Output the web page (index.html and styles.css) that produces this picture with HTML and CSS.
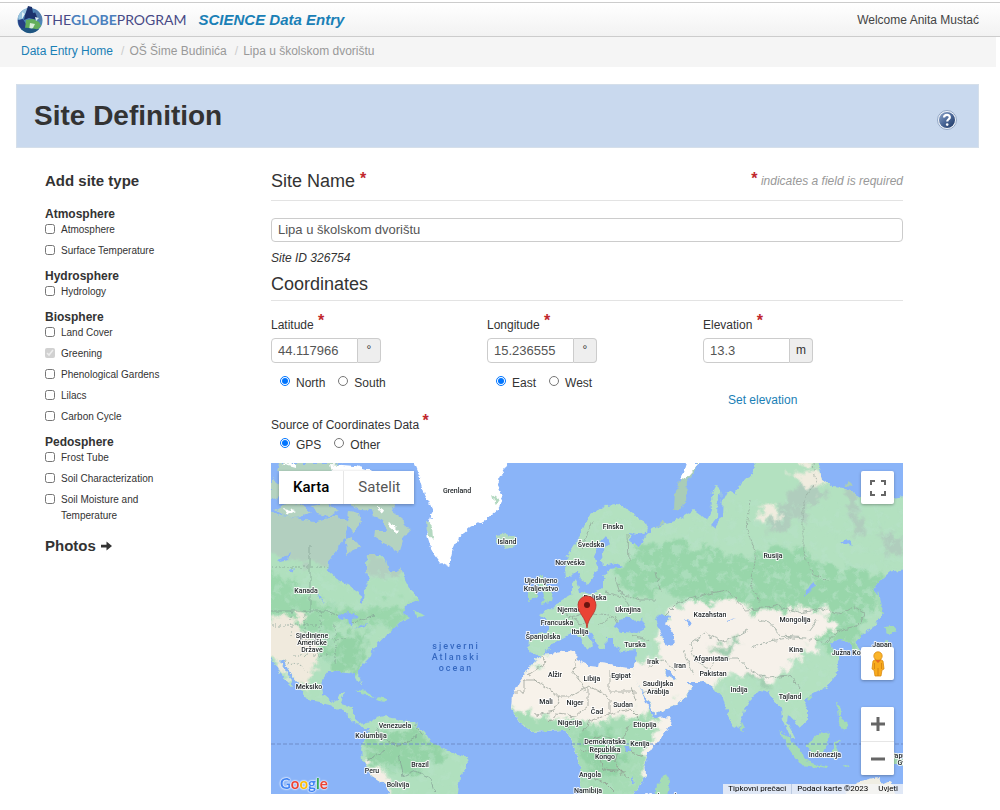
FILE: index.html
```html
<!DOCTYPE html>
<html lang="hr">
<head>
<meta charset="utf-8">
<meta name="viewport" content="width=device-width, initial-scale=1">
<title>Site Definition</title>
<link rel="stylesheet" href="styles.css">
</head>
<body>
<header class="topbar">
  <a class="brand" href="#" aria-label="The GLOBE Program">
    <svg class="brand-globe" viewBox="0 0 28 28" aria-hidden="true">
      <circle cx="14" cy="14.500" r="12.500" fill="#4d86b8"/>
      <path d="M2 11C4 5 9 2 14 2l-2 5-4 1-1 4-4 3z" fill="#9cc7e0"/>
      <path d="M12 0l4 1 1 6 4-1 2 4-2 4-8-2-5 2 1-5z" fill="#1c326c"/>
      <path d="M18 3c5 2 8 6 8 11l-3 2-2-5z" fill="#557dac"/>
      <path d="M2 14l5-1 3 5-1 7C4 23 2 19 2 14z" fill="#263f83"/>
      <path d="M10 14l7-1 6 3 2 4-5 5-6-3-5 1z" fill="#63ae5b"/>
      <path d="M14 17l5 1-2 4-4 3z" fill="#d8edd8"/>
      <path d="M5 23c6-3 12 1 18 0-4 5-12 6-18 0z" fill="#1f5581"/>
      <path d="M6 6l3 2-3 5zM19 11l4 1-3 3z" fill="#e0f1f5"/>
    </svg>
    <span class="brand-name">THE<b>GLOBE</b>PROGRAM</span>
  </a>
  <a class="app-name" href="#">SCIENCE Data Entry</a>
  <span class="welcome">Welcome Anita Mustać</span>
</header>
<nav class="crumbs" aria-label="Breadcrumb">
  <a href="#">Data Entry Home</a><span class="slash">/</span><span>OŠ Šime Budinića</span><span class="slash">/</span><span>Lipa u školskom dvorištu</span>
</nav>

<div class="page">
  <div class="banner">
    <h1>Site Definition</h1>
    <button class="help" type="button" aria-label="Help">
      <svg viewBox="0 0 22 22" aria-hidden="true">
        <defs><linearGradient id="helpFill" x1="0" y1="0" x2="1" y2="1"><stop offset="0" stop-color="#91a8cb"/><stop offset=".5" stop-color="#4a6797"/><stop offset="1" stop-color="#1c3561"/></linearGradient></defs>
        <circle cx="11" cy="11" r="9.500" fill="#f1f5fa" stroke="#93a8c6"/>
        <circle cx="11" cy="11" r="8" fill="url(#helpFill)"/>
        <path d="M8 8.500c.3-3.600 6.200-3.300 5.800 0-.2 1.800-2.600 1.800-2.600 4" fill="none" stroke="#fff" stroke-width="2.200"/>
        <circle cx="11.200" cy="15.600" r="1.300" fill="#fff"/>
      </svg>
    </button>
  </div>

  <div class="columns">
    <aside class="sidebar">
      <h2>Add site type</h2>
      <fieldset><legend>Atmosphere</legend>
        <label><input type="checkbox"><span>Atmosphere</span></label>
        <label><input type="checkbox"><span>Surface Temperature</span></label>
      </fieldset>
      <fieldset><legend>Hydrosphere</legend>
        <label><input type="checkbox"><span>Hydrology</span></label>
      </fieldset>
      <fieldset><legend>Biosphere</legend>
        <label><input type="checkbox"><span>Land Cover</span></label>
        <label><input type="checkbox" checked disabled><span>Greening</span></label>
        <label><input type="checkbox"><span>Phenological Gardens</span></label>
        <label><input type="checkbox"><span>Lilacs</span></label>
        <label><input type="checkbox"><span>Carbon Cycle</span></label>
      </fieldset>
      <fieldset><legend>Pedosphere</legend>
        <label><input type="checkbox"><span>Frost Tube</span></label>
        <label><input type="checkbox"><span>Soil Characterization</span></label>
        <label><input type="checkbox"><span>Soil Moisture and Temperature</span></label>
      </fieldset>
      <a class="photos" href="#">Photos
        <svg viewBox="0 0 12 10" aria-hidden="true"><path d="M0 3.500h6V0l6 5-6 5V6.500H0z" fill="#333"/></svg>
      </a>
    </aside>

    <main class="form">
      <div class="section-head">
        <h2><label for="site-name">Site Name</label> <span class="req">*</span></h2>
        <p class="hint"><span class="req">*</span> indicates a field is required</p>
      </div>
      <input class="text-field site-name" id="site-name" type="text" value="Lipa u školskom dvorištu">
      <p class="site-id">Site ID 326754</p>
      <div class="section-head coords-head"><h2>Coordinates</h2></div>

      <div class="coords">
        <div class="coord">
          <label for="lat">Latitude <span class="req">*</span></label>
          <div class="unit-field"><input id="lat" type="text" value="44.117966"><span>°</span></div>
          <div class="radios">
            <label><input type="radio" name="ns" checked>North</label>
            <label><input type="radio" name="ns">South</label>
          </div>
        </div>
        <div class="coord">
          <label for="lon">Longitude <span class="req">*</span></label>
          <div class="unit-field"><input id="lon" type="text" value="15.236555"><span>°</span></div>
          <div class="radios">
            <label><input type="radio" name="ew" checked>East</label>
            <label><input type="radio" name="ew">West</label>
          </div>
        </div>
        <div class="coord">
          <label for="elev">Elevation <span class="req">*</span></label>
          <div class="unit-field"><input id="elev" type="text" value="13.3"><span>m</span></div>
          <a class="set-elevation" href="#">Set elevation</a>
        </div>
      </div>

      <div class="source" role="radiogroup" aria-labelledby="source-label">
        <div id="source-label">Source of Coordinates Data <span class="req">*</span></div>
        <div class="radios">
          <label><input type="radio" name="src" checked>GPS</label>
          <label><input type="radio" name="src">Other</label>
        </div>
      </div>

      <div class="map">
        <svg class="map-canvas" viewBox="271 463 632 331" role="img" aria-label="World map">
          <defs>
            <filter id="coast" x="-2%" y="-2%" width="104%" height="104%">
              <feTurbulence type="fractalNoise" baseFrequency=".16" numOctaves="3" seed="4" result="n"/>
              <feDisplacementMap in="SourceGraphic" in2="n" scale="6" xChannelSelector="R" yChannelSelector="G"/>
            </filter>
            <filter id="patch" x="-10%" y="-10%" width="120%" height="120%">
              <feTurbulence type="fractalNoise" baseFrequency=".09" numOctaves="4" seed="9" result="n"/>
              <feDisplacementMap in="SourceGraphic" in2="n" scale="28" xChannelSelector="R" yChannelSelector="G" result="d"/>
              <feGaussianBlur in="d" stdDeviation=".8"/>
            </filter>
            <!-- speckled vegetation shading -->
            <filter id="speckle" x="0" y="0" width="100%" height="100%">
              <feTurbulence type="fractalNoise" baseFrequency=".11" numOctaves="4" seed="21"/>
              <feColorMatrix values="0 0 0 0 .47  0 0 0 0 .76  0 0 0 0 .57  5 0 0 0 -2.500"/>
            </filter>
            <clipPath id="america"><path d="M265 508L280 516 300 519 312 522 325 519 335 515 349 524 343 540 336 552 329 560 328 571 338 580 350 586 359 592 361 602 364 601 365 590 369 580 366 565 367 555 380 555 386 560 389 572 397 571 401 568 404 578 409 588 418 596 419 602 405 606 402 614 410 618 395 625 385 636 374 648 372 656 362 666 358 671 362 681 359 683 354 674 340 672 328 671 321 680 323 694 332 702 338 700 341 693 345 692 341 704 354 708 354 719 360 724 372 722 376 718 385 716 400 720 415 722 425 732 432 744 450 752 467 757 468 766 460 776 457 800 391 800 385 784 372 776 362 760 361 748 366 735 370 727 363 727 352 722 345 712 330 705 315 702 305 696 298 683 292 676 284 662 279 661 290 678 293 688 284 679 278 666 265 655z"/></clipPath>
            <clipPath id="eurasia"><path d="M565 578L564 566 570 552 577 540 585 522 592 514 605 505 618 504 632 513 645 522 648 530 642 535 630 532 632 545 640 545 646 534 660 526 676 521 694 510 708 520 712 510 711 495 716 485 721 490 722 502 728 490 735 494 742 482 750 478 757 458 818 458 822 480 832 487 845 488 855 494 870 502 910 495 910 568 890 572 878 582 873 590 880 598 882 612 876 625 862 635 855 642 861 650 859 657 852 650 849 640 840 639 830 643 832 650 838 656 839 665 835 678 825 687 812 694 803 700 808 710 808 720 799 727 792 718 788 714 787 722 795 738 791 738 783 720 780 705 772 700 768 691 760 690 750 700 744 710 741 724 735 728 728 715 723 698 712 686 700 682 685 682 673 676 666 668 664 674 674 680 680 677 692 686 685 697 672 707 655 714 648 700 640 688 634 678 632 668 636 662 637 650 620 651 614 645 614 638 606 638 605 649 599 648 592 634 584 628 581 630 591 640 593 645 588 650 584 643 575 632 566 636 552 644 548 651 540 656 529 651 530 639 535 633 548 632 548 622 540 614 552 608 562 600 572 594 572 582 577 580 580 592 592 594 603 588 603 578 610 569 624 567 616 563 603 566 601 553 609 544 606 536 598 545 594 557 598 567 592 577 587 584 581 580 577 570 569 578z"/></clipPath>
            <clipPath id="africa"><path d="M540 655L552 654 565 651 576 652 577 660 590 666 599 667 600 662 608 663 620 667 632 668 634 676 642 693 648 706 655 718 672 717 668 730 655 745 645 760 646 775 640 785 630 800 585 800 580 785 581 768 575 750 572 738 562 730 545 731 532 732 520 722 511 708 512 695 520 680 532 665z"/></clipPath>
          </defs>
          <rect x="271" y="463" width="632" height="331" fill="#8ab4f8"/>
          <g filter="url(#coast)">
            <g clip-path="url(#america)">
              <rect x="260" y="463" width="215" height="340" fill="#b0e0be"/>
              <g filter="url(#patch)">
                <path d="M260 500h100l-5 60-20 7-40-5-35-20zM365 550l38 15-8 15-28-8z" fill="#b2cfbf"/>
                <path d="M260 570l30 10 20 20 50 10 25-5 40-5-30 30-40-5-50 5-45-15z" fill="#9ad7ab"/>
                <path d="M340 635l30-5-10 40-25 5-12-25zM385 732l40-2 22 22-35 20-45-8-5-20z" fill="#94d3a6"/>
              </g>
              <rect x="260" y="570" width="215" height="234" filter="url(#speckle)" opacity=".5"/>
              <g filter="url(#patch)">
                <path d="M265 620l35-8 5 22 15 10-8 15 2 20-8 10-20-14-25-20z" fill="#f0eadd"/>
                <path d="M365 762l20 13 15 25h-25z" fill="#f5eee5"/>
              </g>
              <g fill="none" stroke="#829d94" stroke-width=".7">
                <path d="M271 611h55l18 6 10 6 20-8M310 545v66"/>
                <path d="M271 567h58M291 611v28M305 611v45M320 611v48M335 625v40M271 625h47M300 639h45M293 655h35M284 662l13 2 12 8" stroke-dasharray="2 2"/>
                <path d="M375 727l12 14 12 5 18-10M385 750l-18 10M399 755l5 22 12-6 15 8 4 12M415 723l8 12"/>
              </g>
              <path d="M277 560l8-3 5-4-2 7-8 2zM340 614l10-2 8 6-5 1-1 10-3-9-9-2zM354 629l14-7-2 4zM317 592l4 6 3 6-4-4zM290 570l5-2-2 4z" fill="#8ab4f8"/>
            </g>
            <g fill="#b4d3c0">
              <path d="M271 478l10 8-4 12-6 2zM275 510l12-7 15 2 10 8-15 5-14-2zM311 506l14-3 14 7-10 6-13-2zM349 511l10 2 2 10-8 9-6-9zM371 508l17 0 14 10 3 10 7 1-8 8-5 16-12-8-13-8 1-6 12 0-4-10-9-5zM345 540l8-3 7 10-9 4-5 4zM280 463h58l8 7-40 5-28-3zM336 500l35 1 25 3-5 8-30-3z"/>
              <path d="M278 493l6-7 15 5-7 5z"/>
            </g>
            <path d="M330 464l25 2 18 5-5 6-35 0zM376 506l8 3-2 5zM390 522l9 9-2 2-8-7zM283 508l13 3-9 4zM281 464l15-1 0 5z" fill="#fff"/>
            <path d="M412 458h98l-8 15-5 10 7 15-7 12-12 10-15 8-12 10-6 14-3 15-8-4-9-12-5-16 3-15 3-10-8-15-5-17z" fill="#fff"/>
            <path d="M427 520l5 6 1 14-5-6zM492 495l7 5-4 5z" fill="#b4d9c1"/>
            <path d="M414 610l8 4 3 2-9 1zM354 689l12 3 10 6-8-1zM378 697l10 2-3 3-9-2z" fill="#a9dfb9"/>
            <path d="M497 535l9-2 11 4-2 9-10 3-8-6z" fill="#b3dbc0"/>
            <path d="M537 577l7-2 0 7 5 8 5 5-1 7-13 3 5-6-2-7-4-5zM528 589l9-3 0 11-9 4z" fill="#a8ddb8"/>
            <g clip-path="url(#eurasia)">
              <rect x="500" y="455" width="410" height="300" fill="#b3e1c0"/>
              <g filter="url(#patch)">
                <path d="M640 545l35-5 65 18 45-12 60 22 40 5-30 75-25 8-30-38-60 5-60-30-45 5-20-20z" fill="#98d6aa"/>
                <path d="M785 500l25-30 10 25-25 30-30 10zM845 492l12 0 8 45-10 5zM880 530l25 10v20l-20-5z" fill="#b0cdbd"/>
              </g>
              <rect x="500" y="500" width="410" height="255" filter="url(#speckle)" opacity=".6"/>
              <g filter="url(#patch)">
                <path d="M760 506l20 3-3 12-17 1zM788 474l24-8 15 15-15 7z" fill="#f0ecdf"/>
                <path d="M664 618l20-14 53-4 15 13 25-5 50 2 9 15-18 17-18 16-15 15-22 8-30-10-13 15-22-1-25-8-25 25-10 25-10 0-14-42 10-18 20-3 15-8z" fill="#f6f1ea"/>
                <path d="M628 660l45 6 24 18-30 38-22-6z" fill="#f6f1ea"/>
                <path d="M712 647l28-8 4 6-25 12zM745 672l30 10-5 5-26-10z" fill="#a1ceb0"/>
              </g>
              <g fill="none" stroke="#91a298" stroke-width=".7">
                <path d="M665 615l12-12 30-9 20-4 18 20 13-1 18-4 22 8 25-4 18 5 12-8 12 8-9 13-20 5-10 11-20-5-25-2-12-14-10-3M706 633l-16 11 5 17 13 8 10-11 20 0 10 11 20 9 22-2 11 13M747 630l-22 12-18-7M683 650l10 25M648 666l15-6 12 10M637 695l20-5 12-7M752 648l17-7 20-3M817 620l-9 12"/>
                <path d="M750 500l-3 30 9 25-5 30 10 18M813 463l3 20-13 18v50l10 24 15 5" stroke-dasharray="2 1"/>
                <path d="M560 608l8 10 14-4M590 597l3 17 15 2M604 592l20 5 5 9M615 578l5 15 20 7 16 0M598 624l16-8 5 9M628 533l1 30M592 520l-10 30M631 635l20 5M573 617l7 8 8-5M655 572l5 20"/>
              </g>
              <path d="M614 628l6-9 10-2 6 5 6-4 5 10-10 5-15-1zM655 619l7-5 7 2-3 7 7 10 1 13-8 1-4-12zM804 598l11-13 0-4-3 2-8 13zM718 494l5 1-1 22-7 11-4-3 6-8zM685 620l7 1-2 5zM725 621l11-2-9 3zM693 624l3 4zM840 542l6-3 6 5-6 1z" fill="#8ab4f8"/>
            </g>
            <path d="M674 509l1-18 8-14 9-12 8-4-5 10-8 10-1 22-7 5zM656 526l6-6 3 4zM843 485l6-4 5 5z" fill="#a9cdb8"/>
            <path d="M700 463l-15 17-4-1 5-16z" fill="#fff"/>
            <g clip-path="url(#africa)">
              <rect x="505" y="645" width="180" height="160" fill="#f7f2ea"/>
              <g filter="url(#patch)">
                <path d="M500 711l50 5 50 7 28-10 25 1 3 24-12 12 5 60h-85l5-55-60-15z" fill="#a6dcb5"/>
                <path d="M575 735l35-5 15 20-10 28-25-10z" fill="#94d3a6"/>
                <path d="M532 655l15 0-8 9-14 6z" fill="#bce2c6"/>
              </g>
              <rect x="570" y="728" width="70" height="70" filter="url(#speckle)" opacity=".4"/>
              <g fill="none" stroke="#90998f" stroke-width=".7">
                <path d="M532 678l26 18 14 0 17-10 21 12M576 656l-2 17 11 15M609 670v22h28M514 692h10l0-12 12 0M540 655l6 8-18 12M588 688l0 18-12 10-20-2-6 7M560 696l-6 15-18 4M610 698v15l-20 8-8 12M610 714l20-5 10 10M632 688l4 12M630 724l-9 18-18-6-15 5M580 750l20 4 4 15 20 3M621 742l-6 20 7 13M625 750l18 6M604 770l15 0 10 8M585 774l19 8 10 10M562 722l8 8"/>
              </g>
              <path d="M625 746l5 0 1 5-5 1zM632 775l2 9-2 0z" fill="#8ab4f8"/>
            </g>
            <path d="M667 774l3 7-4 20h-12l3-17zM742 722l3 6-3 3-2-5zM877 591l4 12 3 10-4-1-4-11zM884 627l8-1 4 5-8 4zM886 638l3 9-8 10-8 2 1-4 8-3zM836 701l5 8-1 8 7 6 1 8-5-1-5-13zM808 696l5 0-3 4zM779 730l9 7 12 12 4 11 8 3 17 3-1 2-27-3-10-13zM809 743l13-12 8 4-3 9-5 10-11-1-5-6zM832 743l9-3-6 5 4 8-3-1-2 7-2-7zM862 745l15 3 20 6 12 9-9 3-20-9zM843 765l7 1-5 2z" fill="#a5dcb5"/>
            <path d="M845 794l12-12 12-3 9-2 4 8 9-4 6 18h-58z" fill="#f0eee3"/>
          </g>
          <path d="M271 744h632" fill="none" stroke="#6f8cc9" stroke-width="1" stroke-dasharray="4 2"/>
          <g class="ocean"><text x="456" y="649">sjeverni</text><text x="456" y="660">Atlanski</text><text x="456" y="671">ocean</text></g>
          <g class="places">
            <text x="457" y="493">Grenland</text><text x="507" y="544">Island</text><text x="613" y="529">Finska</text><text x="591" y="547">Švedska</text><text x="570" y="565">Norveška</text><text x="541" y="583">Ujedinjeno</text><text x="541" y="591">Kraljevstvo</text><text x="595" y="600">Poljska</text><text x="573" y="612">Njemačka</text><text x="628" y="612">Ukrajina</text><text x="557" y="625">Francuska</text><text x="580" y="634">Italija</text><text x="543" y="639">Španjolska</text><text x="635" y="647">Turska</text><text x="773" y="558">Rusija</text><text x="710" y="617">Kazahstan</text><text x="795" y="622">Mongolija</text><text x="796" y="652">Kina</text><text x="882" y="647">Japan</text><text x="852" y="655">Južna Koreja</text><text x="711" y="661">Afganistan</text><text x="713" y="676">Pakistan</text><text x="739" y="692">Indija</text><text x="790" y="699">Tajland</text><text x="653" y="664">Irak</text><text x="680" y="668">Iran</text><text x="658" y="686">Saudijska</text><text x="658" y="694">Arabija</text><text x="555" y="677">Alžir</text><text x="592" y="681">Libija</text><text x="621" y="678">Egipat</text><text x="546" y="704">Mali</text><text x="575" y="705">Niger</text><text x="623" y="707">Sudan</text><text x="597" y="714">Čad</text><text x="570" y="725">Nigerija</text><text x="645" y="727">Etiopija</text><text x="605" y="744">Demokratska</text><text x="605" y="752">Republika</text><text x="605" y="759">Kongo</text><text x="640" y="746">Kenija</text><text x="590" y="777">Angola</text><text x="588" y="793">Namibija</text><text x="665" y="799">Madagaskar</text><text x="825" y="757">Indonezija</text><text x="909" y="758">Papua Nova</text><text x="909" y="765">Gvineja</text><text x="306" y="593">Kanada</text><text x="312" y="638">Sjedinjene</text><text x="312" y="645">Američke</text><text x="312" y="652">Države</text><text x="309" y="689">Meksiko</text><text x="395" y="728">Venezuela</text><text x="371" y="738">Kolumbija</text><text x="420" y="767">Brazil</text><text x="372" y="773">Peru</text><text x="398" y="787">Bolivija</text>
          </g>
          <path d="M587 628c-1-11-9-14-9-23a9 9 0 0 1 18 0c0 9-8 12-9 23z" fill="#ea4335" stroke="#b63228" stroke-width=".8"/>
          <circle cx="587" cy="605" r="3" fill="#6a1510"/>
        </svg>
        <div class="map-types"><button type="button" class="active">Karta</button><button type="button">Satelit</button></div>
        <button class="map-btn fullscreen" type="button" aria-label="Full screen"><svg viewBox="0 0 16 16" aria-hidden="true"><path d="M1 5V1h4M11 1h4v4M15 11v4h-4M5 15H1v-4" fill="none" stroke="#666" stroke-width="2"/></svg></button>
        <div class="map-side">
          <button class="map-btn" type="button" aria-label="Street View"><svg class="pegman" viewBox="0 0 18 26" aria-hidden="true"><path d="M4 10l3-2h4l3 2 1 8-2 1-1 6H6l-1-6-2-1z" fill="#f9ab1d" stroke="#d98a12" stroke-width=".8"/><circle cx="9" cy="5" r="4.200" fill="#fbb52a" stroke="#d98a12" stroke-width=".8"/><path d="M6 9l3 3 3-3z" fill="#e56a22"/><path d="M9 17v8M5.500 12v6M12.500 12v6" stroke="#cf7f13" stroke-width=".8"/></svg></button>
          <div class="zoom">
            <button type="button" aria-label="Zoom in"><svg viewBox="0 0 16 16" aria-hidden="true"><path d="M8 1v14M1 8h14" stroke="#666" stroke-width="3"/></svg></button>
            <button type="button" aria-label="Zoom out"><svg viewBox="0 0 16 16" aria-hidden="true"><path d="M1 8h14" stroke="#666" stroke-width="3"/></svg></button>
          </div>
        </div>
        <a class="google" href="#" aria-label="Google"><span class="g-blue">G</span><span class="g-red">o</span><span class="g-yellow">o</span><span class="g-blue">g</span><span class="g-green">l</span><span class="g-red">e</span></a>
        <div class="attribution"><button type="button">Tipkovni prečaci</button><span>Podaci karte ©2023</span><a href="#">Uvjeti</a></div>
      </div>
    </main>
  </div>
</div>
</body>
</html>
```
FILE: styles.css
```css
* { box-sizing: border-box; }
body {
  margin: 0;
  padding-top: 2px;
  background: #fff;
  color: #333;
  font: 12px/16px "Liberation Sans", Arial, sans-serif;
}
h1, h2, p, fieldset { margin: 0; padding: 0; border: 0; }
a { color: #1a80b6; text-decoration: none; }
button { font: inherit; cursor: pointer; }

.topbar {
  display: flex;
  align-items: center;
  height: 35px;
  padding: 0 21px 0 16px;
  border-top: 1px solid #ccc;
  border-bottom: 1px solid #ccc;
  background: linear-gradient(#fff, #f2f2f2);
}
.brand { display: flex; align-items: center; }
.brand-globe { width: 28px; height: 28px; }
.brand-name { color: #474a86; font: 14px/20px Lato, sans-serif; }
.brand-name b { color: #4a7fbd; font-weight: 700; }
.app-name { margin-left: 12px; font-size: 15px; font-weight: bold; font-style: italic; }
.welcome { margin-left: auto; color: #444; }

.crumbs {
  display: flex;
  margin-right: 4px;
  padding: 6px 21px 8px;
  background: #f5f5f5;
  color: #999;
}
.slash { margin: 0 5px 0 8px; color: #ccc; }

.page { padding: 17px 21px 16px 16px; }
.banner {
  display: flex;
  align-items: center;
  justify-content: space-between;
  padding: 13px 20px 13px 17px;
  border: 1px solid #d5dfea;
  background: #c9d9ee;
}
.banner h1 { font-size: 28px; line-height: 36px; }
.help { width: 22px; height: 22px; margin-top: 7px; padding: 0; border: 0; background: none; }
.help svg { display: block; }

.columns { display: flex; padding: 21px 76px 0 29px; }
.sidebar { flex: 0 0 226px; padding-right: 80px; }
.sidebar h2, .photos { font-size: 15px; line-height: 24px; font-weight: bold; }
.sidebar h2 { margin-bottom: 9px; }
.sidebar fieldset { padding-top: 4px; }
.sidebar legend { float: left; width: 100%; padding: 0; font-weight: bold; }
.sidebar label {
  display: flex;
  clear: both;
  gap: 6px;
  margin-bottom: 5px;
  font-size: 10px;
}
.sidebar label input { flex: none; width: 10px; height: 10px; margin: 2px 0 0; }
.photos { display: flex; align-items: center; gap: 5px; margin-top: 5px; color: #333; }
.photos svg { width: 11px; height: 10px; }

.form { flex: 1; min-width: 0; }
.section-head {
  display: flex;
  align-items: center;
  justify-content: space-between;
  padding-bottom: 7px;
  border-bottom: 1px solid #e3e3e3;
}
.section-head h2 { font-size: 18px; line-height: 24px; font-weight: normal; }
.req {
  color: #c1272d;
  font-size: 16px;
  line-height: 0;
  font-weight: bold;
  vertical-align: 3px;
}
.coord .req { margin-left: 1px; }
.hint { color: #999; font-style: italic; }
.hint .req { font-style: normal; vertical-align: 1px; }
.text-field, .unit-field input {
  border: 1px solid #ccc;
  border-radius: 4px;
  background: #fff;
  color: #555;
  font: 13px/16px "Liberation Sans", Arial, sans-serif;
  padding: 3px 6px;
}
.site-name { display: block; width: 100%; margin-top: 17px; }
.site-id { margin-top: 8px; font-style: italic; }
.coords-head { margin-top: 6px; padding-bottom: 4px; }

.coords {
  display: grid;
  grid-template-columns: repeat(3, 1fr);
  gap: 16px;
  margin-top: 16px;
}
.coord > label { display: block; }
.unit-field { display: flex; margin-top: 5px; }
.unit-field input { width: 87px; height: 25px; border-radius: 4px 0 0 4px; }
.unit-field span {
  width: 23px;
  border: 1px solid #ccc;
  border-left: 0;
  border-radius: 0 4px 4px 0;
  background: #eee;
  line-height: 23px;
  text-align: center;
}
.radios { display: flex; gap: 13px; margin-top: 12px; padding-left: 9px; }
.radios label { display: flex; gap: 6px; }
.radios input { width: 10px; height: 10px; margin: 1px 0 0; }
.set-elevation { display: inline-block; margin: 29px 0 0 25px; }
.source { margin-top: 9px; }
.source .radios { margin-top: 4px; }

.map { position: relative; margin-top: 10px; overflow: hidden; font-family: Roboto, sans-serif; }
.map-canvas { display: block; width: 100%; height: auto; }
.places text, .ocean text { text-anchor: middle; }
.places text {
  fill: #24292c;
  font-size: 7px;
  font-weight: 500;
  stroke: #fff;
  stroke-width: 2px;
  stroke-linejoin: round;
  stroke-opacity: .85;
  paint-order: stroke;
}
.ocean text { fill: #3568c0; font-size: 9px; font-weight: 500; letter-spacing: 2px; }
.map button { border: 0; background: #fff; color: #565656; }
.map-types {
  position: absolute;
  top: 8px;
  left: 8px;
  display: flex;
  box-shadow: 0 1px 3px rgba(0, 0, 0, .3);
}
.map-types button { padding: 0 14px; font-size: 15px; line-height: 33px; }
.map-types button + button { border-left: 1px solid #e6e6e6; }
.map-types .active { color: #000; font-weight: 500; }
.map-btn, .zoom button {
  display: grid;
  place-items: center;
  width: 33px;
  height: 33px;
  padding: 0;
}
.map-btn, .zoom { border-radius: 2px; box-shadow: 0 1px 3px rgba(0, 0, 0, .3); }
.map-btn svg, .zoom svg { width: 16px; height: 16px; }
.map-btn .pegman { width: 18px; height: 26px; }
.fullscreen { position: absolute; top: 8px; right: 9px; }
.map-side {
  position: absolute;
  right: 9px;
  bottom: 19px;
  display: grid;
  gap: 27px;
}
.zoom { overflow: hidden; background: #fff; }
.zoom button { height: 34px; }
.zoom button + button { border-top: 1px solid #e6e6e6; }
.google {
  position: absolute;
  left: 9px;
  bottom: 1px;
  font: 700 15px/20px Lato, sans-serif;
  text-shadow: 0 0 1px #fff, 0 0 2px #fff, 0 0 2px #fff;
}
.g-blue { color: #4285f4; }
.g-red { color: #ea4335; }
.g-yellow { color: #fbbc05; }
.g-green { color: #34a853; }
.attribution {
  position: absolute;
  right: 0;
  bottom: 0;
  display: flex;
  background: rgba(245, 245, 245, .8);
  font-size: 8px;
  line-height: 10px;
}
.attribution > * { padding: 0 5px; color: #000; }
.attribution button { padding: 0 5px; background: none; color: #000; }
.attribution span { border-left: 1px solid #bccbe2; }
```
